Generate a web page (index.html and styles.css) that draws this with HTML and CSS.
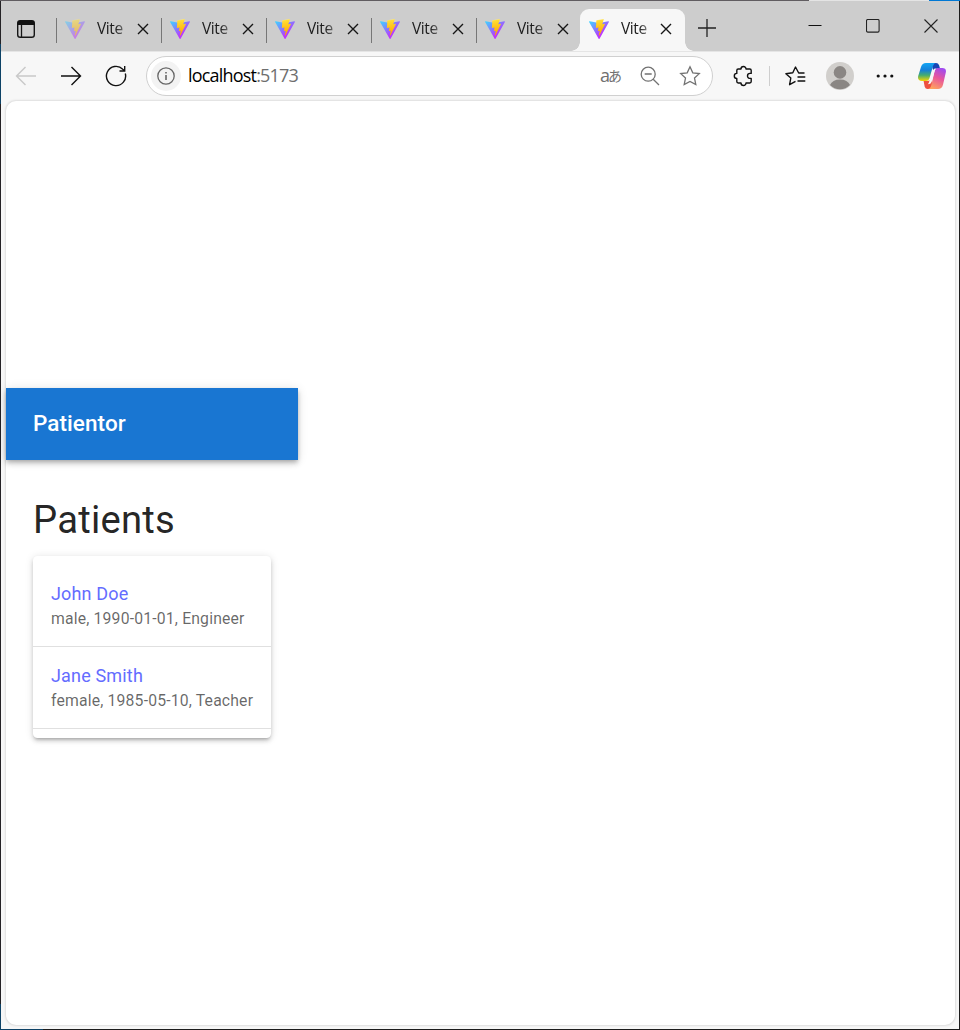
FILE: index.html
```
<!DOCTYPE html>
<html lang="en">
<head>
<meta charset="utf-8">
<title>Patientor</title>
<link rel="stylesheet" href="styles.css">
</head>
<body>
<svg class="defs" width="0" height="0" aria-hidden="true">
  <defs>
    <linearGradient id="viteA" x1="-.828%" x2="57.636%" y1="7.652%" y2="78.411%"><stop offset="0%" stop-color="#41D1FF"/><stop offset="100%" stop-color="#BD34FE"/></linearGradient>
    <linearGradient id="viteB" x1="43.376%" x2="50.316%" y1="2.242%" y2="89.03%"><stop offset="0%" stop-color="#FFEA83"/><stop offset="8.333%" stop-color="#FFDD35"/><stop offset="100%" stop-color="#FFA800"/></linearGradient>
    <linearGradient id="copA" x1="0" y1="0" x2="0" y2="1"><stop offset="0" stop-color="#12a5f4"/><stop offset=".4" stop-color="#1680d8"/><stop offset=".68" stop-color="#45ac70"/><stop offset="1" stop-color="#f7d500"/></linearGradient>
    <linearGradient id="copB" x1=".7" y1="0" x2=".3" y2="1"><stop offset="0" stop-color="#a04bf0"/><stop offset=".45" stop-color="#e8569c"/><stop offset="1" stop-color="#ffa45c"/></linearGradient>
    <symbol id="vite" viewBox="0 0 256 257">
      <path fill="url(#viteA)" d="M255.153 37.938L134.897 252.976c-2.483 4.44-8.862 4.466-11.382.048L.875 37.958c-2.746-4.814 1.371-10.646 6.827-9.67l120.385 21.517a6.537 6.537 0 0 0 2.322-.004l117.867-21.483c5.438-.991 9.574 4.796 6.877 9.62Z"/>
      <path fill="url(#viteB)" d="M185.432.063L96.44 17.501a3.268 3.268 0 0 0-2.634 3.014l-5.474 92.456a3.268 3.268 0 0 0 3.997 3.378l24.777-5.718c2.318-.535 4.413 1.507 3.936 3.838l-7.361 36.047c-.495 2.426 1.782 4.5 4.151 3.78l15.304-4.649c2.372-.72 4.652 1.36 4.15 3.788l-11.698 56.621c-.732 3.542 3.979 5.473 5.943 2.437l1.313-2.028l72.516-144.72c1.215-2.423-.88-5.186-3.54-4.672l-25.505 4.922c-2.396.462-4.435-1.77-3.759-4.114l16.646-57.705c.677-2.35-1.37-4.583-3.769-4.113Z"/>
    </symbol>
    <symbol id="close" viewBox="0 0 12 12"><path d="M1 1l10 10M11 1L1 11" fill="none" stroke="#161616" stroke-width="1.4"/></symbol>
  </defs>
</svg>
<div class="window">
  <header class="tabstrip">
    <svg class="tab-actions" viewBox="0 0 20 20"><rect x="1.7" y="1.7" width="16.6" height="16.6" rx="2.6" fill="none" stroke="#161616" stroke-width="1.4"/><path d="M1.5 4.5a3 3 0 0 1 3-3h11a3 3 0 0 1 3 3V6h-17z" fill="#111"/><path d="M5.5 6v12" stroke="#161616" stroke-width="1.3"/></svg>
    <div class="tabs">
      <div class="tab tab-asleep"><svg class="favicon"><use href="#vite"/></svg><span class="tab-title">Vite</span><svg class="tab-close"><use href="#close"/></svg></div>
      <div class="tab"><svg class="favicon"><use href="#vite"/></svg><span class="tab-title">Vite</span><svg class="tab-close"><use href="#close"/></svg></div>
      <div class="tab"><svg class="favicon"><use href="#vite"/></svg><span class="tab-title">Vite</span><svg class="tab-close"><use href="#close"/></svg></div>
      <div class="tab"><svg class="favicon"><use href="#vite"/></svg><span class="tab-title">Vite</span><svg class="tab-close"><use href="#close"/></svg></div>
      <div class="tab"><svg class="favicon"><use href="#vite"/></svg><span class="tab-title">Vite</span><svg class="tab-close"><use href="#close"/></svg></div>
      <div class="tab tab-active"><svg class="favicon"><use href="#vite"/></svg><span class="tab-title">Vite</span><svg class="tab-close"><use href="#close"/></svg></div>
    </div>
    <svg class="new-tab" viewBox="0 0 18 18"><path d="M9 0v18M0 9h18" stroke="#222" stroke-width="1.3"/></svg>
    <div class="window-controls">
      <svg viewBox="0 0 14 14"><path d="M.5 6.5h13" stroke="#111"/></svg>
      <svg viewBox="0 0 14 14"><rect x=".5" y=".5" width="12.6" height="12.6" rx="1.3" fill="none" stroke="#222" stroke-width="1.1"/></svg>
      <svg viewBox="0 0 14 14"><path d="M.5 .5l13 13M13.5 .5l-13 13" stroke="#222" stroke-width="1.1"/></svg>
    </div>
  </header>
  <nav class="toolbar">
    <svg class="nav-icon nav-disabled" viewBox="0 0 22 22"><path d="M10.5 2L1.5 11l9 9M1.5 11H21"/></svg>
    <svg class="nav-icon" viewBox="0 0 22 22"><path d="M11.5 2l9 9-9 9M20.5 11H1"/></svg>
    <svg class="nav-icon" viewBox="0 0 22 22"><path d="M20.3 8.5A9.6 9.6 0 1 1 17.8 4.2l1.7 1.6M19.7 1v5h-5.2"/></svg>
    <div class="address">
      <span class="site-info"><svg viewBox="0 0 18 18"><circle cx="9" cy="9" r="8.2" fill="none" stroke="#666" stroke-width="1.3"/><path d="M9 8v5M9 5v1.6" stroke="#666" stroke-width="1.6"/></svg></span>
      <span class="url">localhost<span class="port">:5173</span></span>
      <span class="translate"><span class="latin">a</span><span class="kana">あ</span></span>
      <svg class="address-icon zoom-out" viewBox="0 0 22 22"><circle cx="9.2" cy="9.2" r="7"/><path d="M14.2 14.2l5.8 5.8M5.7 9h7"/></svg>
      <svg class="address-icon star" viewBox="0 0 22 22"><path d="M11 1.8l2.8 6 6.5.8-4.8 4.5 1.3 6.5-5.8-3.2-5.8 3.2 1.3-6.5L1.7 8.6l6.5-.8z"/></svg>
    </div>
    <svg class="tool-icon extensions" viewBox="0 0 22 22"><path d="M5.2 4H8a2.5 2.5 0 0 1 5 0h3.8q1.4 0 1.4 1.4v3h-1.2a2.4 2.4 0 0 0 0 5h1.2v3.2q0 1.4-1.4 1.4H13a2.5 2.5 0 0 1-5 0H5.2q-1.4 0-1.4-1.4v-3.2a2.5 2.5 0 0 1 0-5v-3Q3.8 4 5.2 4z"/></svg>
    <span class="divider"></span>
    <svg class="tool-icon favorites" viewBox="0 0 22 22"><path d="M20.5 8h-5.8l-3.2-6-2.7 5.8-6.9.9L6.8 13l-1.2 6.7 5.9-3.3M13.5 12h7.8M13.5 16h7.8"/></svg>
    <svg class="avatar" viewBox="0 0 28 28"><circle cx="14" cy="14" r="14" fill="#d1cfcc"/><circle cx="14" cy="10.4" r="6.3" fill="#8a8683"/><path d="M4 23a10.5 8 0 0 1 20 0 14 14 0 0 1-20 0z" fill="#8a8683"/></svg>
    <svg class="more" viewBox="0 0 18 4"><circle cx="2.2" cy="2" r="1.6"/><circle cx="9" cy="2" r="1.6"/><circle cx="15.8" cy="2" r="1.6"/></svg>
    <svg class="copilot" viewBox="0 0 28 26">
      <path d="M13 0h5q2.3 0 3.1 2.3L22 5.5h-2.5q-3 0-4 3z" fill="#1745b5"/>
      <path d="M15 26H9.6q-2.2 0-2.9-2.2L5.6 18h4q2.8 0 3.8-3z" fill="#ee5140"/>
      <path d="M8 0h10q-2.2 0-3 3l-3.6 12.5Q10.5 18 8 18H4q-4.8 0-3.8-5L3 4Q4.2 0 8 0z" fill="url(#copA)"/>
      <path d="M20 5h4.2q4.5 0 3.6 4.5L25 21.7Q23.8 26 20 26H10q2.3 0 3-2.8l3.4-14Q17.4 5 20 5z" fill="url(#copB)"/>
      <path d="M14.6 8.3Q15.6 5.2 18 5.2q-1.2 1.3-1.8 4L13.6 19q-.7 2.3-3.8 2.3 1.2-1.2 1.8-4z" fill="#f7f7f7"/>
    </svg>
  </nav>
  <main class="viewport">
    <div class="app">
      <div class="appbar">Patientor</div>
      <section class="patients">
        <h1>Patients</h1>
        <ul class="patient-list">
          <li><a class="name">John Doe</a><p>male, 1990-01-01, Engineer</p></li>
          <li><a class="name">Jane Smith</a><p>female, 1985-05-10, Teacher</p></li>
        </ul>
      </section>
    </div>
  </main>
</div>
</body>
</html>
```
FILE: styles.css
```
* { box-sizing: border-box; }
html, body { margin: 0; height: 100%; }
body {
  padding: 1px;
  overflow: hidden;
  background:
    linear-gradient(to right, #615d61 809px, #e4e4e4 809px 929px, #0078d4 929px) 0 0 / 100% 1px no-repeat,
    linear-gradient(to bottom, #242225 44px, #0d4266 44px 104px, #242225 104px 1004px, #0d4266 1004px) 0 0 / 1px 100% no-repeat,
    linear-gradient(to right, #0d4266 43px, #1c1c1c 43px) 0 100% / 100% 1px no-repeat,
    #1c1c1c;
}
svg { display: block; flex: none; }
.defs { position: absolute; }
.window {
  height: 100%;
  display: flex;
  flex-direction: column;
  background: #f7f7f7;
}

/* Tab strip */
.tabstrip {
  height: 50px;
  flex: none;
  display: flex;
  align-items: center;
  padding-left: 15px;
  background: #cdcdcd;
}
.tab-actions { width: 20px; height: 20px; margin-top: 6px; }
.tabs { display: flex; height: 50px; padding-top: 8px; margin-left: 19px; }
.tab {
  position: relative;
  width: 105px;
  height: 42px;
  display: flex;
  align-items: center;
  padding: 0 0 2px 10px;
}
.tab::before {
  content: "";
  position: absolute;
  left: 1px;
  top: 9px;
  width: 1px;
  height: 25px;
  background: #777;
}
.favicon { width: 20px; height: 20px; }
.tab-asleep .favicon { opacity: .5; }
.tab-title {
  width: 40px;
  padding: 0 0 2px 12px;
  font: 15.5px/20px "Open Sans", sans-serif;
  letter-spacing: -.4px;
  color: #1c1c1c;
  -webkit-mask-image: linear-gradient(to right, #000 30px, rgba(0,0,0,.45) 40px);
}
.tab-close { width: 12px; height: 12px; margin-left: 12px; }
.tab-active {
  padding-left: 9px;
  background: #f7f7f7;
  border-radius: 9px 9px 0 0;
}
.tab-active .tab-close { margin-left: 11px; }
.tab-active::before, .tab-active::after {
  content: "";
  position: absolute;
  top: auto;
  bottom: 0;
  width: 9px;
  height: 9px;
}
.tab-active::before { left: -9px; background: radial-gradient(circle at 0 0, transparent 8.5px, #f7f7f7 9px); }
.tab-active::after { right: -9px; background: radial-gradient(circle at 100% 0, transparent 8.5px, #f7f7f7 9px); }
.new-tab { width: 18px; height: 18px; margin-left: 13px; margin-top: 4px; }
.window-controls { display: flex; gap: 44px; margin-left: auto; margin-right: 21px; }
.window-controls svg { width: 14px; height: 14px; }

/* Toolbar */
.toolbar {
  height: 50px;
  flex: none;
  display: flex;
  align-items: center;
  padding: 0 13px 1px 14px;
  box-shadow: inset 0 1px #e5e5e5;
}
.nav-icon {
  width: 22px;
  height: 22px;
  margin-right: 23px;
  fill: none;
  stroke: #111;
  stroke-width: 1.4;
}
.nav-disabled { stroke: #c9c9c9; }
.address {
  width: 567px;
  height: 40px;
  margin-left: -4px;
  display: flex;
  align-items: center;
  border: 1px solid #d0d0d0;
  border-radius: 20px;
  background: #fff;
  padding: 0 11px 0 4px;
}
.site-info {
  width: 30px;
  height: 30px;
  display: grid;
  place-items: center;
  border-radius: 50%;
  background: #f3f3f3;
}
.site-info svg { width: 18px; height: 18px; }
.url {
  margin-left: 7px;
  padding-bottom: 1px;
  font: 18px/24px "Open Sans", sans-serif;
  letter-spacing: -.81px;
  color: #000;
}
.port { color: #6e6e6e; }
.translate {
  display: flex;
  align-items: center;
  margin-left: auto;
  margin-right: 17px;
  padding-bottom: 2px;
  color: #707070;
}
.latin { font: 18px/22px "Open Sans", sans-serif; }
.kana { font: 14px/22px "Noto Sans CJK JP", sans-serif; margin-left: -2px; }
.address-icon { width: 22px; height: 22px; fill: none; stroke: #727272; stroke-width: 1.3; }
.star { margin-left: 18px; }
.tool-icon { width: 22px; height: 22px; fill: none; stroke: #111; stroke-width: 1.4; stroke-linejoin: round; }
.extensions { margin-left: 20px; }
.divider { width: 1px; height: 20px; margin-left: 14px; background: #cecece; }
.favorites { margin-left: 14px; }
.avatar { width: 28px; height: 28px; margin-left: 20px; }
.more { width: 18px; height: 4px; margin-left: 22px; fill: #111; }
.copilot { width: 28px; height: 26px; margin-left: auto; }

/* Page */
.viewport {
  flex: 1;
  margin: 0 4px 4px 5px;
  display: flex;
  align-items: center;
  background: #fff;
  border-radius: 10px;
  box-shadow: 0 0 2px 1px rgba(0, 0, 0, .1);
}
.app { width: 292px; font-family: Roboto, sans-serif; }
.appbar {
  height: 72px;
  display: flex;
  align-items: center;
  padding: 0 27px 2px;
  background: #1976d2;
  color: #fff;
  font-size: 22.5px;
  font-weight: 500;
  letter-spacing: .003em;
  box-shadow: 0 2px 4px -1px rgba(0,0,0,.2), 0 4px 5px rgba(0,0,0,.14), 0 1px 10px rgba(0,0,0,.12);
}
.patients { padding: 37px 27px 0; }
h1 {
  margin: 0 0 12px;
  font-size: 38.25px;
  font-weight: 400;
  line-height: 47px;
  letter-spacing: .006em;
  color: rgba(0, 0, 0, .87);
}
.patient-list {
  margin: 0;
  padding: 9px 0;
  list-style: none;
  border-radius: 4.5px;
  background: #fff;
  box-shadow: 0 3px 3px -2px rgba(0,0,0,.2), 0 3px 4px rgba(0,0,0,.14), 0 1px 8px rgba(0,0,0,.12);
}
.patient-list li {
  height: 82px;
  padding: 15px 18px;
  border-bottom: 1px solid rgba(0, 0, 0, .12);
}
.name {
  display: block;
  font-size: 18px;
  line-height: 27px;
  letter-spacing: .00938em;
  color: #646cff;
}
.patient-list p {
  margin: 0;
  padding-top: .75px;
  font-size: 15.75px;
  line-height: 22.5px;
  letter-spacing: .01071em;
  white-space: nowrap;
  color: rgba(0, 0, 0, .6);
}
```
